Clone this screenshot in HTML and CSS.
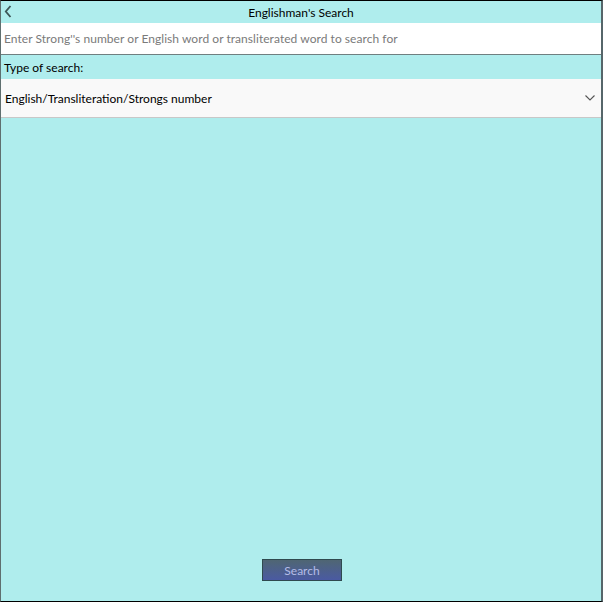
FILE: index.html
```
<!DOCTYPE html>
<html>
<head>
<meta charset="utf-8">
<link rel="stylesheet" href="styles.css">
</head>
<body>
<div class="window">
  <div class="titlebar">
    <span class="back">
      <svg width="8" height="13" viewBox="0 0 8 13"><path d="M6.5 1 L1.8 6.5 L6.5 12" fill="none" stroke="#3c5556" stroke-width="1.8"/></svg>
    </span>
    <span class="title">Englishman's Search</span>
  </div>
  <div class="inputrow">
    <span class="placeholder">Enter Strong''s number or English word or transliterated word to search for</span>
  </div>
  <div class="label">Type of search:</div>
  <div class="select">
    <span class="value">English/Transliteration/Strongs number</span>
    <svg class="chev" width="10" height="6" viewBox="0 0 10 6"><path d="M0.5 0.5 L5 5 L9.5 0.5" fill="none" stroke="#555" stroke-width="1.1"/></svg>
  </div>
  <div class="spacer"></div>
  <div class="footer">
    <button class="btn">Search</button>
  </div>
</div>
</body>
</html>
```
FILE: styles.css
```
html, body {
  margin: 0;
  padding: 0;
  background: #ffffff;
}
body {
  width: 604px;
  height: 604px;
  font-family: "Lato", "Noto Sans", sans-serif;
  font-size: 12px;
  color: #000;
}
.window {
  box-sizing: border-box;
  width: 603px;
  height: 602px;
  border-top: 1px solid #000;
  border-left: 1px solid #5f6f6f;
  border-right: 2px solid #56666a;
  border-bottom: 1px solid #000;
  background: #afeded;
  display: flex;
  flex-direction: column;
}
.titlebar {
  height: 22px;
  position: relative;
  display: flex;
  align-items: center;
  justify-content: center;
}
.back {
  position: absolute;
  left: 3px;
  top: 4px;
  display: flex;
}
.title {
  font-size: 12px;
}
.inputrow {
  height: 32px;
  background: #fff;
  border-bottom: 1px solid #6f7f80;
  display: flex;
  align-items: center;
  padding-left: 3px;
  box-sizing: border-box;
}
.placeholder {
  color: #7a7a7a;
  letter-spacing: 0.05px;
}
.label {
  height: 24px;
  display: flex;
  align-items: center;
  padding-left: 3px;
}
.select {
  height: 39px;
  background: #f9f9f9;
  border-bottom: 1px solid #c8c8c8;
  box-sizing: border-box;
  display: flex;
  align-items: center;
  justify-content: space-between;
  padding-left: 4px;
  padding-right: 6px;
}
.spacer {
  flex: 1;
}
.footer {
  display: flex;
  justify-content: center;
  padding-bottom: 20px;
  padding-left: 2px;
}
.btn {
  width: 80px;
  height: 22px;
  border: 1px solid #2f4a4f;
  background: linear-gradient(#4f6673, #4a5aa2);
  color: #b4bce8;
  font-family: "Lato", "Noto Sans", sans-serif;
  font-size: 12px;
  padding: 0;
}
```
